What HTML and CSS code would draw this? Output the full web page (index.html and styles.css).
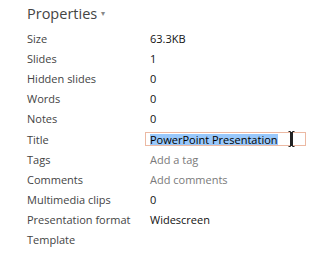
FILE: index.html
```html
<!DOCTYPE html>
<html>
<head>
<meta charset="utf-8">
<link rel="stylesheet" href="styles.css">
</head>
<body>
<div class="panel">
  <div class="heading">Properties <span class="caret">▾</span></div>
  <div class="props">
    <div class="label">Size</div><div class="value">63.3KB</div>
    <div class="label">Slides</div><div class="value">1</div>
    <div class="label">Hidden slides</div><div class="value">0</div>
    <div class="label">Words</div><div class="value">0</div>
    <div class="label">Notes</div><div class="value">0</div>
    <div class="label">Title</div>
    <div class="value"><div class="editbox"><span class="sel">PowerPoint Presentation</span><span class="ibeam"><svg width="7" height="16" viewBox="0 0 7 16"><path d="M0.5 0.5h2v15h-2M6.5 0.5h-2v15h2M3.5 1v14" fill="none" stroke="#222" stroke-width="1"/></svg></span></div></div>
    <div class="label">Tags</div><div class="value placeholder">Add a tag</div>
    <div class="label">Comments</div><div class="value placeholder">Add comments</div>
    <div class="label">Multimedia clips</div><div class="value">0</div>
    <div class="label">Presentation format</div><div class="value">Widescreen</div>
    <div class="label">Template</div><div class="value"></div>
  </div>
</div>
</body>
</html>
```
FILE: styles.css
```css
html, body {
  margin: 0;
  padding: 0;
  background: #fff;
}
.panel {
  padding: 1px 0 0 27px;
  font-family: "Open Sans", "Noto Sans", sans-serif;
  color: #444;
}
.heading {
  font-size: 14.5px;
  line-height: 24px;
  height: 27px;
  color: #444;
}
.caret {
  font-size: 8px;
  color: #888;
  vertical-align: 3px;
}
.props {
  display: grid;
  grid-template-columns: 123px 1fr;
  grid-auto-rows: 20.2px;
  font-size: 11px;
  align-items: center;
}
.label {
  color: #444;
  white-space: nowrap;
}
.value {
  color: #111;
  white-space: nowrap;
}
.placeholder {
  color: #7a7a7a;
}
.editbox {
  margin-left: -5px;
  width: 155px;
  height: 12px;
  border: 1px solid #ecb9a3;
  padding: 0 0 0 4px;
  display: flex;
  align-items: center;
  position: relative;
}
.sel {
  background: #99c8fb;
  color: #000;
  line-height: 11px;
}
.ibeam {
  position: absolute;
  left: 142px;
  top: -2px;
  line-height: 0;
}
```
